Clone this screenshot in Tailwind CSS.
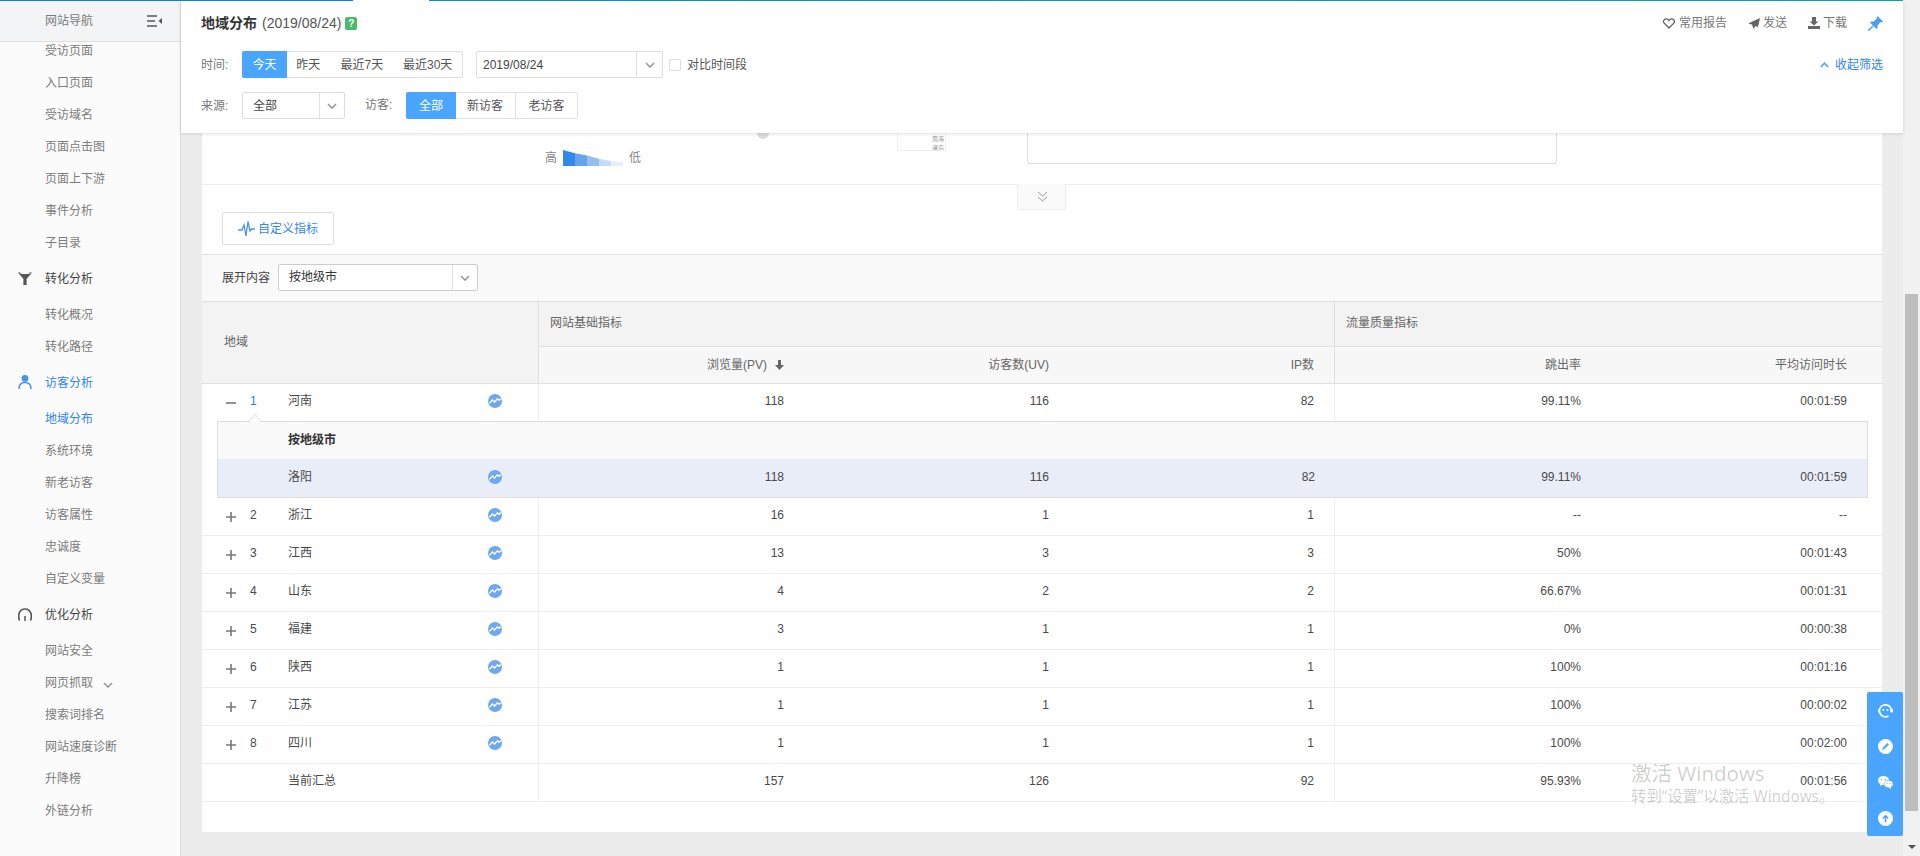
<!DOCTYPE html>
<html lang="zh-CN">
<head>
    <meta charset="UTF-8">
    <title>地域分布</title>
    <script src="https://cdn.jsdelivr.net/npm/@tailwindcss/browser@4"></script>
</head>
<body class="w-[1920px] h-[856px] overflow-hidden relative text-[12px] text-[#4a4a4a] bg-[#ececec] font-['Liberation_Sans','Noto_Sans_CJK_SC',sans-serif]">
    <svg class="hidden">
        <symbol id="trend" viewBox="0 0 14 14">
            <circle cx="7" cy="7" r="7" fill="#6fa8ee"/>
            <path d="M1.5 9.2 L4.5 6 L6.5 8 L9.5 4.8 L11 6.4 L13 4.6" fill="none" stroke="#fff" stroke-width="1.3"/>
        </symbol>
        <symbol id="plus" viewBox="0 0 10 10">
            <path d="M0 5H10M5 0V10" stroke="#777" stroke-width="1.6"/>
        </symbol>
        <symbol id="chev" viewBox="0 0 10 6">
            <path d="M1 1 L5 5 L9 1" fill="none" stroke="#999" stroke-width="1.6"/>
        </symbol>
    </svg>

    <!-- top progress line -->
    <div class="absolute top-0 left-0 w-[1903px] h-px flex z-30">
        <div class="w-[353px] bg-[#0780ee]"></div>
        <div class="w-[76px] bg-white"></div>
        <div class="flex-1 bg-linear-to-r from-[#0a8ae6] to-[#00a9b0]"></div>
    </div>

    <div class="flex h-full">
        <!-- Sidebar -->
        <aside class="w-[181px] shrink-0 h-full bg-[#fbfbfb] border-r border-[#dddddd] overflow-hidden text-[#7c7c7c]">
            <div class="relative z-10 h-[42px] bg-[#f3f4f5] border-b border-[#dedede] flex items-center pl-[45px] pr-[18px] justify-between">
                <span>网站导航</span>
                <svg class="w-[15px] h-[12px]" viewBox="0 0 15 12"><path d="M0 1H10M0 6H8M0 11H10" stroke="#555" stroke-width="1.6"/><path d="M15 3V9L11.5 6Z" fill="#555"/></svg>
            </div>
            <div class="-mt-[7px] pl-[45px]">
                <div class="h-[32px] flex items-center">受访页面</div>
                <div class="h-[32px] flex items-center">入口页面</div>
                <div class="h-[32px] flex items-center">受访域名</div>
                <div class="h-[32px] flex items-center">页面点击图</div>
                <div class="h-[32px] flex items-center">页面上下游</div>
                <div class="h-[32px] flex items-center">事件分析</div>
                <div class="h-[32px] flex items-center">子目录</div>
                <div class="h-[40px] flex items-center relative text-[#444]">
                    <svg class="absolute -left-[27px] top-[12px] w-[14px] h-[14px]" viewBox="0 0 14 14"><path d="M0 1.5 L14 1.5 L8.6 8 V14 H5.4 V8 Z" fill="#555"/><ellipse cx="7" cy="2" rx="5" ry="1" fill="#fff"/></svg>
                    转化分析
                </div>
                <div class="h-[32px] flex items-center">转化概况</div>
                <div class="h-[32px] flex items-center">转化路径</div>
                <div class="h-[40px] flex items-center relative text-[#2f86ee]">
                    <svg class="absolute -left-[27px] top-[12px] w-[14px] h-[14px]" viewBox="0 0 14 14"><circle cx="7" cy="3.4" r="3.4" fill="#4a94ec"/><path d="M1 14 C1 9.5 3.5 7.5 7 7.5 C10.5 7.5 13 9.5 13 14" fill="none" stroke="#4a94ec" stroke-width="1.5"/></svg>
                    访客分析
                </div>
                <div class="h-[32px] flex items-center text-[#2f86ee]">地域分布</div>
                <div class="h-[32px] flex items-center">系统环境</div>
                <div class="h-[32px] flex items-center">新老访客</div>
                <div class="h-[32px] flex items-center">访客属性</div>
                <div class="h-[32px] flex items-center">忠诚度</div>
                <div class="h-[32px] flex items-center">自定义变量</div>
                <div class="h-[40px] flex items-center relative text-[#444]">
                    <svg class="absolute -left-[27px] top-[13px] w-[14px] h-[13px]" viewBox="0 0 14 13"><path d="M1.6 12.5 C-0.5 8 1 1 7 1 C13 1 14.5 8 12.4 12.5" fill="none" stroke="#555" stroke-width="1.7"/><path d="M7 8V13" stroke="#555" stroke-width="1.5"/></svg>
                    优化分析
                </div>
                <div class="h-[32px] flex items-center">网站安全</div>
                <div class="h-[32px] flex items-center gap-[10px]">网页抓取 <svg class="w-[10px] h-[6px] mt-[3px]" viewBox="0 0 10 6"><use href="#chev"/></svg></div>
                <div class="h-[32px] flex items-center">搜索词排名</div>
                <div class="h-[32px] flex items-center">网站速度诊断</div>
                <div class="h-[32px] flex items-center">升降榜</div>
                <div class="h-[32px] flex items-center">外链分析</div>
            </div>
        </aside>

        <!-- Main -->
        <main class="w-[1722px] shrink-0 h-full px-[21px] overflow-hidden">
            <div class="bg-white w-[1680px] h-[832px]">
                <!-- map area, mostly hidden by the fixed header -->
                <div class="relative h-[185px] border-b border-[#eeeeee]">
                    <div class="absolute left-[555px] top-[127px] w-[12px] h-[12px] rounded-full bg-[#dddddd]"></div>
                    <div class="absolute left-[695px] top-[120px] w-[49px] h-[31px] border border-[#eeeeee] text-[6px] leading-[9px] text-[#999] text-right pt-[14px] pr-[1px] overflow-hidden">南海<br>诸岛</div>
                    <div class="absolute left-[825px] top-[120px] w-[530px] h-[44px] border border-[#dddddd] rounded-[3px]"></div>
                    <div class="absolute left-[343px] top-[149px] flex items-center gap-[6px] text-[#888]">
                        <span>高</span>
                        <svg class="w-[60px] h-[16px]" viewBox="0 0 60 16">
                            <path d="M0 0 L12 3.3 V16 H0Z" fill="#3389e8"/>
                            <path d="M12 3.3 L24 5.5 V16 H12Z" fill="#66a3ea"/>
                            <path d="M24 5.5 L36 8.7 V16 H24Z" fill="#93bff0"/>
                            <path d="M36 8.7 L48 11 V16 H36Z" fill="#c5dcf6"/>
                            <path d="M48 11 L60 12 V16 H48Z" fill="#e6f0fb"/>
                        </svg>
                        <span>低</span>
                    </div>
                    <div class="absolute left-[815px] top-[184px] w-[49px] h-[26px] pl-px bg-[#fafafa] border border-t-0 border-[#eeeeee] rounded-b-[2px] flex items-center justify-center z-10">
                        <svg class="w-[11px] h-[11px]" viewBox="0 0 11 11"><path d="M1 1 L5.5 5 L10 1M1 6 L5.5 10 L10 6" fill="none" stroke="#999" stroke-width="1"/></svg>
                    </div>
                </div>

                <div class="h-[70px] pt-[27px] pl-[20px] border-b border-[#e0e0e0]">
                    <div class="w-[112px] h-[33px] border border-[#dddddd] rounded-[2px] flex items-center pl-[15px] gap-[3px] text-[#2f86ee]">
                        <svg class="w-[17px] h-[16px]" viewBox="0 0 17 16"><path d="M0 9 H4 L6 4 L8 15 L10 0.5 L12 10 L13.5 8 H17" fill="none" stroke="#4a94ec" stroke-width="1.3"/></svg>
                        自定义指标
                    </div>
                </div>

                <div class="h-[47px] bg-[#f9f9f9] border-b border-[#e0e0e0] flex items-center pl-[20px] pb-px">
                    <span class="w-[56px] text-[#444]">展开内容</span>
                    <div class="w-[200px] h-[27px] bg-white border border-[#cccccc] rounded-[2px] flex items-center">
                        <span class="flex-1 pl-[10px] pb-px text-[#333]">按地级市</span>
                        <span class="w-[25px] h-full border-l border-[#e0e0e0] flex items-center justify-center"><svg class="w-[10px] h-[6px]" viewBox="0 0 10 6"><use href="#chev"/></svg></span>
                    </div>
                </div>

                <!-- table head -->
                <div class="grid grid-cols-[337px_265px_265px_266px_266px_281px] grid-rows-[45px_37px] text-[#666]">
                    <div class="row-span-2 bg-[#f3f3f3] border-b border-r border-[#e0e0e0] flex items-center pl-[22px] pb-[2px]">地域</div>
                    <div class="col-span-3 bg-[#f3f3f3] border-b border-r border-[#e0e0e0] flex items-center pl-[11px] pb-[2px]">网站基础指标</div>
                    <div class="col-span-2 bg-[#f3f3f3] border-b border-[#e0e0e0] flex items-center pl-[11px] pb-[2px]">流量质量指标</div>
                    <div class="bg-[#f7f7f7] border-b border-[#e0e0e0] flex items-center justify-end pr-[20px] gap-[8px]">浏览量(PV) <svg class="w-[9px] h-[10px]" viewBox="0 0 9 10"><path d="M3 0H6V5H9L4.5 10L0 5H3Z" fill="#666"/></svg></div>
                    <div class="bg-[#f7f7f7] border-b border-[#e0e0e0] flex items-center justify-end pr-[20px]">访客数(UV)</div>
                    <div class="bg-[#f7f7f7] border-b border-r border-[#e0e0e0] flex items-center justify-end pr-[20px]">IP数</div>
                    <div class="bg-[#f7f7f7] border-b border-[#e0e0e0] flex items-center justify-end pr-[20px]">跳出率</div>
                    <div class="bg-[#f7f7f7] border-b border-[#e0e0e0] flex items-center justify-end pr-[35px]">平均访问时长</div>
                </div>

                <!-- row 1 -->
                <div class="h-[37px] grid grid-cols-[337px_265px_265px_266px_266px_281px]">
                    <div class="border-r border-[#eeeeee] flex items-center pb-[4px] pl-[24px]">
                        <svg class="w-[10px] h-[10px] mt-[5px]" viewBox="0 0 10 10"><path d="M0 5H10" stroke="#777" stroke-width="1.6"/></svg>
                        <span class="ml-[14px] w-[38px] text-[#2f7fd8]">1</span>
                        <span class="w-[200px]">河南</span>
                        <svg class="w-[14px] h-[14px]"><use href="#trend"/></svg>
                    </div>
                    <div class="flex items-center justify-end pr-[20px] pb-[4px]">118</div>
                    <div class="flex items-center justify-end pr-[20px] pb-[4px]">116</div>
                    <div class="border-r border-[#eeeeee] flex items-center justify-end pr-[20px] pb-[4px]">82</div>
                    <div class="flex items-center justify-end pr-[20px] pb-[4px]">99.11%</div>
                    <div class="flex items-center justify-end pr-[35px] pb-[4px]">00:01:59</div>
                </div>

                <!-- expanded panel -->
                <div class="relative ml-[15px] w-[1651px] h-[77px] border border-[#dddddd]">
                    <svg class="absolute -top-[9px] left-[31px] w-[12px] h-[9px]" viewBox="0 0 12 9"><path d="M0 9 L6 1 L12 9" fill="#fff" stroke="#dddddd"/></svg>
                    <div class="h-[37px] bg-[#f9f9f9] flex items-center pl-[70px] pb-[2px] font-bold text-[#333]">按地级市</div>
                    <div class="h-[38px] bg-[#e8edf8] grid grid-cols-[321px_265px_265px_266px_266px_266px]">
                        <div class="flex items-center pl-[70px] pb-[2px]">
                            <span class="w-[200px]">洛阳</span>
                            <svg class="w-[14px] h-[14px]"><use href="#trend"/></svg>
                        </div>
                        <div class="flex items-center justify-end pr-[20px] pb-[2px]">118</div>
                        <div class="flex items-center justify-end pr-[20px] pb-[2px]">116</div>
                        <div class="flex items-center justify-end pr-[20px] pb-[2px]">82</div>
                        <div class="flex items-center justify-end pr-[20px] pb-[2px]">99.11%</div>
                        <div class="flex items-center justify-end pr-[20px] pb-[2px]">00:01:59</div>
                    </div>
                </div>

                <!-- rows -->
                <div id="rows"></div>
                <div class="h-[38px] grid grid-cols-[337px_265px_265px_266px_266px_281px] border-b border-[#eeeeee]">
                    <div class="border-r border-[#eeeeee] flex items-center pb-[4px] pl-[86px]">当前汇总</div>
                    <div class="flex items-center justify-end pr-[20px] pb-[4px]">157</div>
                    <div class="flex items-center justify-end pr-[20px] pb-[4px]">126</div>
                    <div class="border-r border-[#eeeeee] flex items-center justify-end pr-[20px] pb-[4px]">92</div>
                    <div class="flex items-center justify-end pr-[20px] pb-[4px]">95.93%</div>
                    <div class="flex items-center justify-end pr-[35px] pb-[4px]">00:01:56</div>
                </div>
            </div>
        </main>

        <!-- scrollbar -->
        <div class="w-[17px] h-full bg-[#f1f1f1] flex flex-col pl-[2px]">
            <div class="h-[294px]"></div>
            <div class="h-[517px] w-[13px] bg-[#bdbdbd]"></div>
            <div class="flex-1 flex items-end pb-[7px] pl-[3px]">
                <svg class="w-[8px] h-[4px]" viewBox="0 0 8 4"><path d="M0 0H8L4 4Z" fill="#505050"/></svg>
            </div>
        </div>
    </div>

    <!-- fixed filter header -->
    <header class="absolute top-0 left-[181px] w-[1722px] h-[133px] bg-white shadow-[0_1px_4px_rgba(0,0,0,0.12)] z-20 pl-[20px] pr-[20px]">
        <div class="h-[46px] flex items-center">
            <span class="text-[14px] font-bold text-[#333]">地域分布</span>
            <span class="text-[14px] ml-[5px] text-[#555]">(2019/08/24)</span>
            <span class="ml-[4px] w-[12px] h-[13px] rounded-[2px] bg-[#4cb96b] text-white text-[10px] font-bold flex items-center justify-center">?</span>
            <div class="ml-auto flex items-center text-[#777]">
                <svg class="w-[12px] h-[11px] mr-[4px]" viewBox="0 0 12 11"><path d="M6 10 L1.2 5.2 C-0.4 3 1.2 0.8 3.2 0.8 C4.4 0.8 5.4 1.5 6 2.5 C6.6 1.5 7.6 0.8 8.8 0.8 C10.8 0.8 12.4 3 10.8 5.2 Z" fill="none" stroke="#555" stroke-width="1.2"/></svg>
                <span>常用报告</span>
                <svg class="w-[12px] h-[11px] ml-[21px] mr-[3px]" viewBox="0 0 12 11"><path d="M12 0 L0 5.5 L4 6.6 L5.5 11 L7.5 8 L10 9 Z" fill="#666"/></svg>
                <span>发送</span>
                <svg class="w-[12px] h-[12px] ml-[21px] mr-[3px]" viewBox="0 0 12 12"><path d="M4 0H8V4.5H10.5L6 8.5L1.5 4.5H4Z" fill="#666"/><path d="M0 9H12V12H0Z" fill="#666"/></svg>
                <span>下载</span>
                <svg class="w-[15px] h-[15px] ml-[21px]" viewBox="0 0 15 15"><path d="M9.5 0 L15 5.5 L13.5 6.5 L12.5 6 L9.5 9.5 L9.5 12 L8.5 13 L2 6.5 L3 5.5 L5.5 5.5 L9 2.5 L8.5 1.5 Z" fill="#4a9cf5"/><path d="M5 10 L0 15" stroke="#4a9cf5" stroke-width="1.4"/></svg>
            </div>
        </div>
        <div class="mt-[5px] h-[27px] flex items-center">
            <span class="w-[41px] text-[#777]">时间:</span>
            <div class="flex h-full w-[221px] border border-[#e0e0e0] rounded-[2px] text-[#555]">
                <span class="-m-px w-[45px] bg-[#4aa5ff] text-white rounded-l-[2px] flex items-center justify-center h-[27px]">今天</span>
                <span class="w-[45px] flex items-center justify-center">昨天</span>
                <span class="w-[63px] flex items-center justify-center">最近7天</span>
                <span class="w-[69px] flex items-center justify-center">最近30天</span>
            </div>
            <div class="ml-[13px] w-[187px] h-full border border-[#dddddd] rounded-[2px] flex items-center">
                <span class="flex-1 pl-[6px] text-[#444]">2019/08/24</span>
                <span class="w-[26px] h-full border-l border-[#e0e0e0] flex items-center justify-center"><svg class="w-[10px] h-[6px]" viewBox="0 0 10 6"><use href="#chev"/></svg></span>
            </div>
            <span class="ml-[6px] w-[12px] h-[12px] border border-[#dddddd] rounded-[2px]"></span>
            <span class="ml-[6px] text-[#555]">对比时间段</span>
            <span class="ml-auto flex items-center gap-[6px] text-[#2f86ee]">
                <svg class="w-[9px] h-[6px]" viewBox="0 0 9 6"><path d="M0.8 5 L4.5 1.2 L8.2 5" fill="none" stroke="#4aa5ff" stroke-width="1.7"/></svg>
                收起筛选
            </span>
        </div>
        <div class="mt-[14px] h-[27px] flex items-center">
            <span class="w-[41px] text-[#777]">来源:</span>
            <div class="w-[103px] h-full border border-[#dddddd] rounded-[2px] flex items-center">
                <span class="flex-1 pl-[10px] text-[#444]">全部</span>
                <span class="w-[25px] h-full border-l border-[#e0e0e0] flex items-center justify-center"><svg class="w-[10px] h-[6px]" viewBox="0 0 10 6"><use href="#chev"/></svg></span>
            </div>
            <span class="ml-[20px] w-[41px] text-[#777] pb-[2px]">访客:</span>
            <div class="flex h-full w-[172px] border border-[#e0e0e0] rounded-[2px] text-[#555]">
                <span class="-m-px w-[50px] bg-[#4aa5ff] text-white rounded-l-[2px] flex items-center justify-center h-[27px]">全部</span>
                <span class="w-[61px] border-r border-[#e0e0e0] flex items-center justify-center">新访客</span>
                <span class="flex-1 flex items-center justify-center">老访客</span>
            </div>
        </div>
    </header>

    <!-- floating tools -->
    <div class="absolute left-[1867px] top-[692px] w-[36px] h-[144px] bg-[#4aa5ff] rounded-[2px] z-30 flex flex-col">
        <div class="h-[36px] flex items-center justify-center">
            <svg class="w-[15px] h-[15px]" viewBox="0 0 15 15"><path d="M10.5 13 A6 6 0 1 1 13.4 7" fill="none" stroke="#fff" stroke-width="1.7"/><circle cx="5.3" cy="7" r="1" fill="#fff"/><circle cx="9.5" cy="7" r="1" fill="#fff"/><rect x="12.2" y="6" width="2.8" height="3.5" rx="1" fill="#fff"/><rect x="0" y="6" width="2" height="3.5" rx="1" fill="#fff"/></svg>
        </div>
        <div class="h-[36px] flex items-center justify-center">
            <svg class="w-[15px] h-[15px]" viewBox="0 0 15 15"><circle cx="7.5" cy="7.5" r="7.5" fill="#fff"/><path d="M4 11 L5 8.5 L9.5 4 L11 5.5 L6.5 10 Z" fill="#4aa5ff"/></svg>
        </div>
        <div class="h-[36px] flex items-center justify-center">
            <svg class="w-[15px] h-[13px]" viewBox="0 0 15 13"><ellipse cx="5.5" cy="4.5" rx="5.5" ry="4.5" fill="#fff"/><path d="M2 7 L2 10 L5 8Z" fill="#fff"/><ellipse cx="10.5" cy="8" rx="4.5" ry="3.6" fill="#fff" stroke="#4aa5ff" stroke-width="0.6"/><path d="M12.5 10.5 L13 13 L10.5 11.4Z" fill="#fff"/><circle cx="3.6" cy="3.6" r="0.7" fill="#4aa5ff"/><circle cx="7.2" cy="3.6" r="0.7" fill="#4aa5ff"/><circle cx="9" cy="7.5" r="0.55" fill="#4aa5ff"/><circle cx="12" cy="7.5" r="0.55" fill="#4aa5ff"/></svg>
        </div>
        <div class="h-[36px] flex items-center justify-center">
            <svg class="w-[15px] h-[15px]" viewBox="0 0 15 15"><circle cx="7.5" cy="7.5" r="7.5" fill="#fff"/><path d="M7.5 11.5V5M4.8 7.5 L7.5 4.5 L10.2 7.5" fill="none" stroke="#4aa5ff" stroke-width="1.5"/></svg>
        </div>
    </div>

    <!-- windows watermark -->
    <div class="absolute left-[1631px] top-[758px] z-40 text-[rgba(0,0,0,0.2)] font-['Open_Sans','Noto_Sans_CJK_SC',sans-serif] pointer-events-none">
        <div class="text-[20.5px] leading-[30px]">激活 Windows</div>
        <div class="text-[15.4px] leading-[20px] mt-[-1px]">转到“设置”以激活 Windows。</div>
    </div>

    <script>
        // province rows, same shape for each
        const rows = [
            ['2', '浙江', '16', '1', '1', '--', '--'],
            ['3', '江西', '13', '3', '3', '50%', '00:01:43'],
            ['4', '山东', '4', '2', '2', '66.67%', '00:01:31'],
            ['5', '福建', '3', '1', '1', '0%', '00:00:38'],
            ['6', '陕西', '1', '1', '1', '100%', '00:01:16'],
            ['7', '江苏', '1', '1', '1', '100%', '00:00:02'],
            ['8', '四川', '1', '1', '1', '100%', '00:02:00']
        ];
        document.getElementById('rows').innerHTML = rows.map(r => `
            <div class="h-[38px] grid grid-cols-[337px_265px_265px_266px_266px_281px] border-b border-[#eeeeee]">
                <div class="border-r border-[#eeeeee] flex items-center pb-[4px] pl-[24px]">
                    <svg class="w-[10px] h-[10px] mt-[5px]"><use href="#plus"/></svg>
                    <span class="ml-[14px] w-[38px]">${r[0]}</span>
                    <span class="w-[200px]">${r[1]}</span>
                    <svg class="w-[14px] h-[14px]"><use href="#trend"/></svg>
                </div>
                <div class="flex items-center justify-end pr-[20px] pb-[4px]">${r[2]}</div>
                <div class="flex items-center justify-end pr-[20px] pb-[4px]">${r[3]}</div>
                <div class="border-r border-[#eeeeee] flex items-center justify-end pr-[20px] pb-[4px]">${r[4]}</div>
                <div class="flex items-center justify-end pr-[20px] pb-[4px]">${r[5]}</div>
                <div class="flex items-center justify-end pr-[35px] pb-[4px]">${r[6]}</div>
            </div>`).join('');
    </script>
</body>
</html>
